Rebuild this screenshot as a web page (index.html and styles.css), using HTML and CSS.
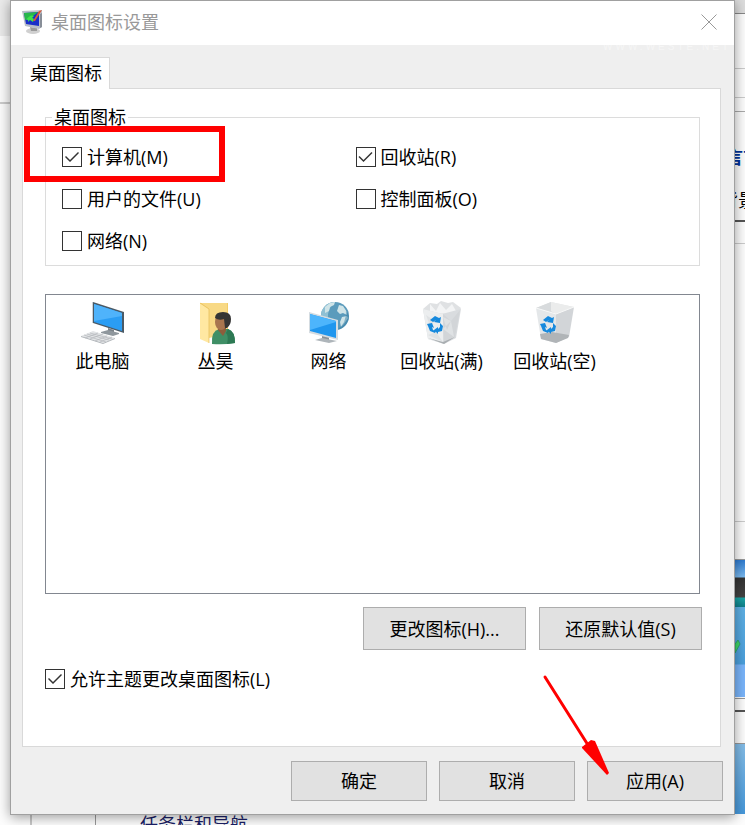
FILE: index.html
```html
<!DOCTYPE html>
<html lang="zh-CN">
<head>
  <meta charset="UTF-8" />
  <meta name="viewport" content="width=device-width, initial-scale=1.0" />
  <title>桌面图标设置</title>
  <link rel="stylesheet" href="styles.css">
</head>
<body>
  <!-- settings window behind the dialog -->
  <div class="backdrop">
    <div class="back-left"></div>
    <div class="back-bottom">
      <div class="back-nav"></div>
      <a class="back-link" href="#">任务栏和导航</a>
      <div class="back-strip"></div>
    </div>
    <div class="back-right">
      <div class="back-bar"></div>
      <div class="back-row row-a"></div>
      <div class="back-row row-b"></div>
      <div class="back-row row-c"></div>
      <div class="back-text blue">言言</div>
      <div class="back-text">背景</div>
      <div class="back-row row-d"></div>
      <div class="back-row row-e"></div>
      <div class="back-row row-f"></div>
      <div class="back-photo"></div>
      <div class="back-sky">
        <svg width="6" height="16" viewBox="0 0 6 16"><path d="M0 5l3-4 2 4-5 9z" fill="#3fd968" stroke="#2a9a58" stroke-width=".7"/></svg>
      </div>
      <div class="back-row row-g"></div>
      <div class="back-row row-h"></div>
      <div class="back-blue"></div>
    </div>
  </div>

  <main class="dialog">
    <header class="title-bar">
      <svg class="title-icon" width="22" height="24" viewBox="0 0 22 24">
        <ellipse cx="11" cy="21" rx="7" ry="3" fill="#d0d0d0"/>
        <path d="M8 17l7 1v3H9z" fill="#9a9a9a"/>
        <path d="M0 1l20-1v17l-3 2-14-3z" fill="#b9bfc8"/>
        <path d="M2 3l15-1v14L4 14z" fill="#1a2fc8"/>
        <path d="M2 3l14-1-6 5-7 3z" fill="#28b84a"/>
        <path d="M4 10q4-6 8-4l-2 2q3 0 1 4l-3-2-2 2q1-3-2-2z" fill="#3ee34b"/>
        <path d="M11 11l6-10 3-1-7 11z" fill="#db5938"/>
        <path d="M18 4l2-1v14l-2 1z" fill="#888e98"/>
      </svg>
      <h1>桌面图标设置</h1>
      <button class="close-btn" type="button" aria-label="关闭">
        <svg width="16" height="16" viewBox="0 0 16 16"><path d="M0.5 0.5l15 15M15.5 0.5l-15 15" stroke="#999" fill="none"/></svg>
      </button>
    </header>
    <div class="watermark">WWW.WESTE.NET</div>

    <div class="tabs">
      <button class="tab" type="button">桌面图标</button>
    </div>

    <section class="panel">
      <fieldset class="icon-group">
        <legend>桌面图标</legend>
        <div class="check-grid">
          <label class="check"><input type="checkbox" checked />计算机(M)</label>
          <label class="check"><input type="checkbox" checked />回收站(R)</label>
          <label class="check"><input type="checkbox" />用户的文件(U)</label>
          <label class="check"><input type="checkbox" />控制面板(O)</label>
          <label class="check"><input type="checkbox" />网络(N)</label>
        </div>
        <div class="red-frame"></div>
      </fieldset>

      <ul class="icon-list">
        <li>
          <svg width="48" height="44" viewBox="0 0 48 44">
            <path d="M29 27l6 2v4l-6-1z" fill="#7a8187"/>
            <path d="M22 31l7-2 11 3v1l-6 2-12-3z" fill="#8f979d"/>
            <path d="M14 1l31 10v21l-31-10z" fill="#4b5a66"/>
            <path d="M15 3l28 9v18l-28-9z" fill="#2a9df4"/>
            <path d="M15 3l28 9v3L15 20z" fill="#4fb3fb"/>
            <path d="M13 1h1v21h-1z" fill="#cdd3d8"/>
            <path d="M2 35l12-5 22 7-12 5z" fill="#e2e4e6"/>
            <path d="M5 34l22 7M8 33l22 6M11 32l22 6M6 37l13-5M11 38l13-5M16 40l12-5M21 41l12-5" stroke="#b4b8bc" stroke-width=".7"/>
            <path d="M2 35l22 7 12-5v1l-12 5-22-7z" fill="#b0b5b9"/>
          </svg>
          <span>此电脑</span>
        </li>
        <li>
          <svg width="48" height="44" viewBox="0 0 48 44">
            <path d="M8 2h28v32H8z" fill="#f2cc68"/>
            <path d="M9 2h26v31l-18 4V8z" fill="#f8d985"/>
            <path d="M8 2l9 6v34l-9-4z" fill="#ffe8a2"/>
            <path d="M8 2l9 6v34" fill="none" stroke="#e5bb55" stroke-width=".7"/>
            <path d="M20 43q-1-13 7-15h9q7 2 7 14-11 2-23 1z" fill="#3f8f66"/>
            <path d="M36 28q7 2 7 14l-8 1q2-8-1-11z" fill="#2d7954"/>
            <path d="M26 25h8v5l-3 5-5-6z" fill="#8d5d3c"/>
            <ellipse cx="29" cy="21" rx="6" ry="8" fill="#a8754f"/>
            <path d="M23 17q0-6 8-6 8 0 8 7 0 6-4 9h-2l-1-9q-5 2-9-1z" fill="#343434"/>
          </svg>
          <span>丛昊</span>
        </li>
        <li>
          <svg width="48" height="44" viewBox="0 0 48 44">
            <circle cx="30" cy="15" r="14" fill="#5b9bbc"/>
            <path d="M16 15A14 14 0 0 1 30 1q-8 6-7 17z" fill="#8fc0d4"/>
            <path d="M20 6l5-4 5-1-1 3-4 2-1 4-4 2zM34 4l4 1 4 6 0 3-4-2-3 1-3-3zM37 16l5-1 1 2-4 6-3 3-1-5z" fill="#cfe4e8"/>
            <path d="M44 15a14 14 0 0 1-12 14q10-7 9-20z" fill="#357da4" opacity=".5"/>
            <path d="M17 34l7 2v4h-7z" fill="#8a9298"/>
            <path d="M10 39l7-2 15 3-8 2z" fill="#aeb5ba"/>
            <path d="M4 11l29 8v20L4 32z" fill="#d5dce1"/>
            <path d="M5 13l26 7v17L5 30z" fill="#1f96ee"/>
            <path d="M5 13l26 7v1L5 29z" fill="#4db5fc"/>
          </svg>
          <span>网络</span>
        </li>
        <li>
          <svg width="48" height="44" viewBox="0 0 48 44">
            <path d="M5 8l7-6 7 1 4-3 7 2 5-1 8 6-4 8-29-2z" fill="#dfe1e3"/>
            <path d="M12 3l6 7 4-8 6 7 6-6 4 7-7 3-12-1-7-2z" fill="#f3f4f5"/>
            <path d="M5 8l19 5 19-5-5 29-12 6-16-5z" fill="#d9dcdf"/>
            <path d="M5 8l20 5v29l-15-4z" fill="#eceeef"/>
            <path d="M25 13l8 7 9-11-5 27-11 6z" fill="#d2d5d8"/>
            <path d="M33 20l-8 8 11 8zM25 16l8 4-4 9zM8 14l9 6-5 5zM10 34l8-3 7 10z" fill="#dfe2e4"/>
            <path d="M10 37l15 4 12-5-11 7z" fill="#a9aeb1"/>
            <g fill="#1689dd"><path d="M12 19l5-4 4 2 2-1-1 6-6-1 2-2-3 2zM22 22l3 3-1 5-4 1v2l-4-4 4-3v2l2-2zM9 23l5-1 2 5-2-1 1 3 3 1-1 2-5-2-2-5z"/></g>
          </svg>
          <span>回收站(满)</span>
        </li>
        <li>
          <svg width="48" height="44" viewBox="0 0 48 44">
            <path d="M5 7l15-6 23 5-18 7z" fill="#e5e7e8"/>
            <path d="M5 7l15-6v9l5 3z" fill="#d8dbdd"/>
            <path d="M20 1l23 5-18 7-5-3z" fill="#ebecec"/>
            <path d="M5 7l20 6v29l-15-4z" fill="#e4e7e9"/>
            <path d="M25 13l18-7-5 30-13 6z" fill="#d2d5d8"/>
            <path d="M9 33l12-2 17 3-1 3-12 5-15-4z" fill="#b0b4b7"/>
            <path d="M5 7l20 6 18-7" fill="none" stroke="#f7f8f8"/>
            <g fill="#1689dd"><path d="M12 19l5-4 4 2 2-1-1 6-6-1 2-2-3 2zM22 22l3 3-1 5-4 1v2l-4-4 4-3v2l2-2zM9 23l5-1 2 5-2-1 1 3 3 1-1 2-5-2-2-5z"/></g>
          </svg>
          <span>回收站(空)</span>
        </li>
      </ul>

      <div class="actions">
        <button class="btn" type="button">更改图标(H)...</button>
        <button class="btn" type="button">还原默认值(S)</button>
      </div>

      <label class="check"><input type="checkbox" checked />允许主题更改桌面图标(L)</label>
    </section>

    <footer class="dialog-footer">
      <button class="btn" type="button">确定</button>
      <button class="btn" type="button">取消</button>
      <button class="btn" type="button">应用(A)</button>
    </footer>

    <svg class="arrow" width="70" height="102" viewBox="0 0 70 102">
      <path d="M3 3l43 68" stroke="#f00" stroke-width="3" stroke-linecap="round"/>
      <path d="M40 73l9-7 4 1 14 32-2 2-25-27z" fill="#f00"/>
    </svg>
  </main>
</body>
</html>
```

FILE: styles.css
```css
* {
  box-sizing: border-box;
}

body {
  margin: 0;
  position: relative;
  font-family: 'Open Sans', 'Noto Sans CJK SC', sans-serif;
  font-size: 18px;
  line-height: 20px;
  color: #000;
  background-color: #fdfdfd;
}

button,
input {
  font: inherit;
  color: inherit;
}

/* window behind */
.backdrop {
  position: absolute;
  inset: 0;
  overflow: hidden;
}

.back-left {
  width: 10px;
  height: 104px;
  border-bottom: 2px solid #ccc;
  background: linear-gradient(#ebebeb 36px, #fcfcfc 36px);
}

.back-bottom {
  position: absolute;
  left: 30px;
  right: 10px;
  bottom: 0;
  height: 11px;
  display: flex;
  align-items: flex-start;
}

.back-nav {
  width: 66px;
  height: 11px;
  border-left: 2px solid #c8c8c8;
  border-right: 1px solid #999;
}

.back-link {
  margin-left: 44px;
  color: #1b1f66;
  text-decoration: none;
}

.back-strip {
  width: 108px;
  height: 1px;
  margin-left: 232px;
  background-color: #27445c;
}

.back-right {
  position: absolute;
  top: 0;
  right: 0;
  width: 10px;
  overflow: hidden;
}

.back-bar {
  height: 14px;
  background-color: #ddd;
  border-bottom: 1px solid #888;
}

.back-row {
  border-bottom: 1px solid #ccc;
}

.row-a {
  height: 55px;
}

.row-b {
  height: 29px;
}

.row-c {
  height: 14px;
  margin-bottom: 35px;
  border-color: #aaa;
}

.back-text {
  margin-left: -15px;
  margin-bottom: 23px;
  white-space: nowrap;
}

.back-text.blue {
  margin-left: -10px;
  color: #003399;
  font-weight: bold;
}

.row-d {
  height: 2px;
  margin-top: -13px;
  border-bottom: 2px solid #555;
}

.row-e {
  height: 22px;
}

.row-f {
  height: 278px;
}

.back-photo {
  height: 48px;
  margin-top: 37px;
  border-top: 1px solid #999;
  background: linear-gradient(#2e7bd0, #7ab9ef 17px, #333 18px, #444 37px, #19a6a6 38px, #0f7f8a);
}

.back-sky {
  height: 90px;
  padding-top: 32px;
  background: linear-gradient(#5fb1e5, #4b9fdc 57px, #7ab5fb 58px);
}

.back-sky svg {
  display: block;
}

.row-g {
  height: 2px;
  border-color: #999;
}

.row-h {
  height: 13px;
  border-bottom: 2px solid #555;
}

.back-blue {
  height: 71px;
  margin-top: 31px;
  border-top: 1px solid #999;
  background: linear-gradient(#84bde8, #4698da);
}

/* dialog */
.dialog {
  position: relative;
  margin: 0 10px 10px;
  border: 1px solid #a0a0a0;
  background-color: #efefef;
  box-shadow: 0 2px 12px rgba(0, 0, 0, 0.4);
}

.title-bar {
  display: flex;
  align-items: center;
  height: 44px;
  padding: 0 17px 2px 11px;
  background-color: #fff;
}

.title-bar h1 {
  flex: 1;
  margin: 0 0 0 7px;
  font-size: 18px;
  font-weight: normal;
  color: #999;
}

.close-btn {
  padding: 0;
  border: none;
  background: none;
}

.close-btn svg {
  display: block;
}

.watermark {
  height: 12px;
  padding-right: 3px;
  overflow: hidden;
  text-align: right;
  font-family: 'Liberation Sans', sans-serif;
  font-size: 10px;
  line-height: 4px;
  letter-spacing: 3px;
  color: #f6f6f6;
}

.tabs {
  padding-left: 11px;
}

.tab {
  position: relative;
  z-index: 1;
  display: block;
  height: 32px;
  margin-bottom: -1px;
  padding: 0 7px 2px;
  border: 1px solid #d9d9d9;
  border-bottom: none;
  background-color: #fff;
}

.panel {
  margin: 0 13px 0 11px;
  padding: 18px 20px 57px 22px;
  border: 1px solid #d9d9d9;
  background-color: #fff;
}

.icon-group {
  position: relative;
  min-width: 0;
  margin: 0 0 28px;
  padding: 20px 50px 14px 16px;
  border: 1px solid #dcdcdc;
}

.icon-group legend {
  margin-left: -10px;
  padding: 0 2px;
}

.check-grid {
  display: grid;
  grid-template-columns: 1fr 1fr;
  gap: 22px 0;
}

.check {
  display: flex;
  align-items: center;
  gap: 5px;
  height: 20px;
}

.check input {
  appearance: none;
  width: 20px;
  height: 20px;
  margin: 0;
  border: 1px solid #333;
  background-color: #fff;
}

.check input:checked::before {
  content: '';
  display: block;
  width: 18px;
  height: 18px;
  background-color: #333;
  clip-path: polygon(2px 9px, 3px 8px, 7px 12px, 15px 4px, 16px 5px, 7px 14px);
}

.red-frame {
  position: absolute;
  top: -1px;
  left: -22px;
  width: 201px;
  height: 56px;
  border: 6px solid #f00;
  pointer-events: none;
}

.icon-list {
  display: flex;
  align-items: flex-start;
  height: 300px;
  margin: 0;
  padding: 6px 0 0;
  border: 1px solid #828790;
  list-style: none;
  overflow: auto;
}

.icon-list li {
  display: flex;
  flex-direction: column;
  align-items: center;
  gap: 6px;
  width: 113px;
}

.actions {
  display: flex;
  justify-content: flex-end;
  gap: 13px;
  margin: 13px -2px 19px 0;
}

.btn {
  padding: 0;
  border: 1px solid #adadad;
  background-color: #e1e1e1;
}

.actions .btn {
  width: 163px;
  height: 43px;
}

.dialog-footer {
  display: flex;
  justify-content: flex-end;
  gap: 12px;
  padding: 14px 11px 13px;
}

.dialog-footer .btn {
  width: 136px;
  height: 40px;
}

/* arrow pointing at the apply button */
.arrow {
  position: absolute;
  right: 122px;
  bottom: 38px;
  pointer-events: none;
}
```
